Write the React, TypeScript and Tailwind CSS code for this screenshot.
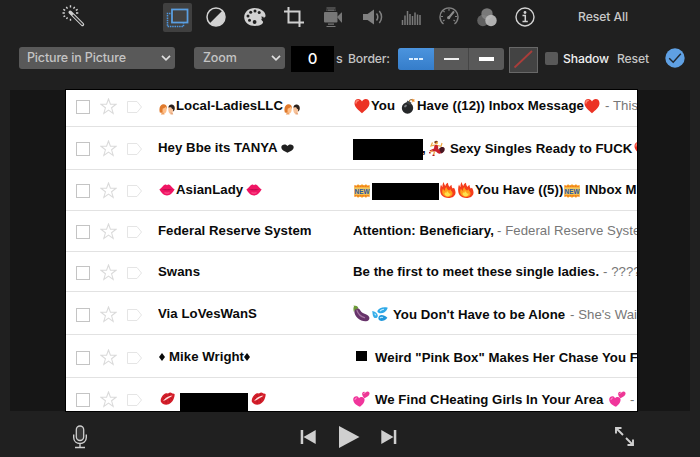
import React from "react";

type P = { className?: string };

const Heart = ({ className = "" }: P) => (
  <svg viewBox="0 0 16 16" className={"h-4 w-4 shrink-0 " + className}>
    <path d="M8 15.200C5 12.400.5 9.300.5 5.200.5 2.600 2.100 1 4.300 1 6 1 7.300 1.900 8 3.400 8.700 1.900 10 1 11.700 1c2.200 0 3.800 1.600 3.800 4.200C15.500 9.300 11 12.400 8 15.200z" fill="#ec3325" />
    <path d="M2 5c0-1.500 1-2.500 2.300-2.500" stroke="#ff8573" strokeWidth="1.400" fill="none" strokeLinecap="round" />
  </svg>
);

const Couple = ({ className = "" }: P) => (
  <svg viewBox="0 0 16 12" className={"h-3 w-4 shrink-0 " + className}>
    <path d="M.8 9.500C-.2 6 .8 1.800 3.800 1.300c3-.4 4.400 1.600 4 4.200L4.500 6.500 3.500 10z" fill="#e07a2c" />
    <path d="M3.800 5.500C5.300 5.600 6 4.200 7 4c1.200 1.500.8 5.500-1.200 6.500C4 10.800 3 8 3.800 5.500z" fill="#ffc08a" />
    <path d="M1.800 11.500L3 9.500h1.800l.8 2z" fill="#f0a060" />
    <path d="M9.400 4.500C9.500 2 11.500 1.200 13 1.500c2.500.4 3.200 2.500 2.500 5.500l-1.300 1.500z" fill="#2b211c" />
    <path d="M9.500 4.500c1.200.2 2.200-.6 3 .2.400 1 .8 1.300 1.600 1.500.4 1.800-.7 4-2.400 4.500-1.900.1-2.800-3-2.200-6.200z" fill="#f7c39b" />
    <path d="M11.500 11.500V9.500h2.200l.5 2z" fill="#e9a97e" />
  </svg>
);

const Bomb = ({ className = "" }: P) => (
  <svg viewBox="0 0 14 16" className={"h-4 w-[14px] shrink-0 " + className}>
    <circle cx="6.500" cy="10" r="5.700" fill="#252729" />
    <path d="M6.500 2.500l4 2.200-1.300 2.500-4-2.200z" fill="#3d4144" />
    <path d="M8.500 4C8 1.500 10.500 1 12 2.500" stroke="#9b7a4c" strokeWidth="1.100" fill="none" />
    <path d="M11 .5l1 1 1.500-.6-.3 1.500.8 1-1.500.2-1 1-.2-1.500z" fill="#f08a29" />
    <ellipse cx="4.500" cy="8" rx="1.600" ry="1.100" fill="#777b7e" transform="rotate(-40 4.500 8)" />
  </svg>
);

const Lips = ({ className = "" }: P) => (
  <svg viewBox="0 0 16 12" className={"h-3 w-4 shrink-0 " + className}>
    <path d="M.3 5.600C2.500 4.500 4.500.5 6.300.5 7.200.5 7.500 1.200 8 1.200s.8-.7 1.700-.7c1.800 0 3.800 4 6 5.100-2 3-4.500 6-7.700 6S2.300 8.600.3 5.600z" fill="#f01564" />
    <path d="M1 5.600c3 .2 4.500-.6 7 0 2.500-.6 4 .2 7 0-3.500 1-10.500 1-14 0z" fill="#b00a48" />
    <path d="M5.500 8.800c1.500.5 3.500.5 5 0" stroke="#ff6e9e" strokeWidth=".8" fill="none" />
  </svg>
);

const Kiss = ({ className = "" }: P) => (
  <svg viewBox="0 0 15 13" className={"h-[13px] w-[15px] shrink-0 " + className}>
    <path d="M.9 9.800C0 7.500 2.300 3 5.300 1.600c1.300-.6 2 0 2.700-.2C9.300.2 11 .1 11.700 1c.7.700 2 .6 2.900.9.300 3.900-1.900 8.700-5.900 10.300-2.700 1-6.500.3-7.800-2.400z" fill="#d41e2a" />
    <path d="M3 8.900c2.300-.4 3.200-1.500 5-2.500 1.500-1 3-1.300 4.500-3-2 .4-3.400.5-5 1.500C5.500 5.800 4.500 7.300 3 8.900z" fill="#ffe1df" />
    <path d="M3 5.500l2 1M5.500 3l1.200 2M9.500 1.500L9 4M6 11.500l.3-3M10 10.500L9 7M12.500 7.500l-2-1.700" stroke="#9b101c" strokeWidth=".5" />
  </svg>
);

const Dancer = ({ className = "" }: P) => (
  <svg viewBox="0 0 16 16" className={"h-4 w-4 shrink-0 " + className}>
    <path d="M5.500 4.800l3.500.2.300 4c2 1 3.500 2.500 3 4-1.500 1.600-4 .2-5.300-1.500L2.500 11.500.3 10.500 5 8.500z" fill="#c8202c" />
    <path d="M10 9c1.500-2.500 4.500-2.500 5.700-.6.300 2.300-1 4.300-3.500 5z" fill="#4a1520" />
    <circle cx="7.300" cy="2.700" r="1.800" fill="#f2b04e" />
    <path d="M5.400 2.800C4.800.5 7.800 0 9.100 1.500L7.800 2 6.800 3.200z" fill="#7c3f1f" />
    <path d="M5.500 5.200L2 6l1.500-3.500M8.500 5.500l3.500.8 1-3.300" fill="none" stroke="#efaa45" strokeWidth="1.200" />
    <path d="M5.500 11.500L4.500 15.300M3.500 10.500L1 12.500" stroke="#efaa45" strokeWidth="1.300" />
    <path d="M3.500 15.400h2M.3 12l1 1.500" stroke="#b31523" strokeWidth="1.200" />
  </svg>
);

const NewSign = ({ className = "" }: P) => (
  <svg viewBox="0 0 16 14" className={"h-[14px] w-4 shrink-0 " + className}>
    <path d="M.3 1l2 .7L4 .2l2 1.300L8 .2l2 1.300L12 .2l1.700 1.500 2-.7v12l-2-.7-1.700 1.500-2-1.300-2 1.300-2-1.300-2 1.300-1.700-1.500-2 .7z" fill="#f8a21c" />
    <path d="M.8 2.200h14.400M.8 11.900h14.400" stroke="#e8542c" strokeWidth=".8" strokeDasharray="1.500 1" />
    <rect x=".3" y="3.400" width="15.400" height="7.400" fill="#f0c763" />
    <text x="8" y="9.900" fontSize="8" textAnchor="middle" textLength="15" lengthAdjust="spacingAndGlyphs" className="fill-[#2a55a0] font-['Liberation_Sans',sans-serif] font-bold">NEW</text>
  </svg>
);

const Fire = ({ className = "" }: P) => (
  <svg viewBox="0 0 16 16" className={"h-4 w-4 shrink-0 " + className}>
    <path d="M1.500 13C-.4 10-.1 5.300 1 2.500c.5 1.300.8 2 1.500 2.600C2.400 3 2.600 1.400 3.800 0 4 1.700 4.500 3 5.400 3.900 5.600 2.400 6.600 1.200 8 .8c0 2 .6 3.200 1.700 4.100.3-1 .9-1.700 1.900-2 0 1.500.3 2.600 1.200 3.600l1.200-.8c2 3.500 2.200 6.800-.4 8.800-3.200 2.300-9.500 2-12.100-1.500z" fill="#f53d1c" />
    <path d="M3 12.500c-1.300-2-.9-4.300.1-6 .4 1.400 1.100 2 1.900 2.300-.1-1.800.4-3 1.400-3.800.2 2 1.500 3.100 2.900 3.600.2-.6.6-1 1.200-1.300.3 1.400 1.400 2.100 1.800 3 .8 1.800-.1 3.500-2 4.200-2.500.9-5.800.2-7.300-2z" fill="#ff9e1a" />
    <path d="M5 13c-.7-1-.4-2 .2-2.800l1 .9.800-2 2.500 2.700.9-.5c.4 1.500-.5 2.600-2 2.900-1.400.2-2.700-.3-3.400-1.200z" fill="#ffe14d" />
  </svg>
);

const Eggplant = ({ className = "" }: P) => (
  <svg viewBox="0 0 17 17" className={"h-[17px] w-[17px] shrink-0 " + className}>
    <path d="M3 3c3-.6 4 2 5.500 4 1.500 1.800 4.500 1.700 6.500 3.500 2.600 2.200 1.400 5.300-2 5.700C7.500 16.700 1 11.500 1.300 5.500z" fill="#67336a" />
    <path d="M4 5.500c1 3 3.500 6 7.500 7.200" stroke="#a475a3" strokeWidth="1.300" fill="none" strokeLinecap="round" />
    <path d="M.5.500l1.500.3C4 .6 5 2 5.500 3.500L4 3.300 3.300 5 2.200 4 .9 7C.2 5 .3 2.500 1 1.600z" fill="#6d9b38" />
  </svg>
);

const Sweat = ({ className = "" }: P) => (
  <svg viewBox="0 0 16 15" className={"h-4 w-4 shrink-0 " + className}>
    <path d="M5.500 4.200C7 1.500 11 0 15.800 1.200c-1.500 4.300-5.300 6.300-8.300 5.500-1.500-.5-2.500-1.300-2-2.500z" fill="#2fa9e7" />
    <path d="M.2 4.500c2.500.3 5.500 2.200 5.600 4.800 0 2.400-2.700 3-4.100 1.400C.4 9 .7 6.500.2 4.500z" fill="#36aee9" />
    <path d="M7.300 9.200c1.900-1.500 5.200-.7 8.100 2-2.200 2.800-5.700 4-7.700 2.800-1.800-1-1.700-3.400-.4-4.800z" fill="#2298db" />
    <path d="M8 4.500c1-1 2.500-1.700 4-1.700M8 11.500c.8-.8 2-.8 3-.5M2.500 7.200c.8.500 1.200 1 1.300 1.700" stroke="#c2ecff" strokeWidth="1.100" fill="none" />
  </svg>
);

const TwoHearts = ({ className = "" }: P) => (
  <svg viewBox="0 0 17 16" className={"h-4 w-[17px] shrink-0 " + className}>
    <path d="M7 15.800C3.500 14.500.1 12 .2 8.300.3 6 2.700 4.600 4.600 5.500c.7.400 1.200 1 1.400 1.700C7 5.800 9.600 5.300 11 7c1.800 2.400-.8 6.500-4 8.800z" fill="#f0359b" />
    <path d="M11.500 7.200C9.800 5.500 8.600 3.500 9.400 1.800c.7-1.400 2.400-1.500 3.300-.1C13.500.3 15.500.2 16.300 1.600c1.200 2.300-2 4.500-4.800 5.600z" fill="#ed3795" />
    <path d="M2 8.500c0-1 .7-1.500 1.500-1.500M10.700 2.500c.1-.5.5-.8.900-.8" stroke="#ff9dd1" strokeWidth="1" fill="none" strokeLinecap="round" />
  </svg>
);

const BlackHeart = ({ className = "" }: P) => (
  <svg viewBox="0 0 12 10" preserveAspectRatio="none" className={"h-[9px] w-[13px] shrink-0 " + className}>
    <path d="M6 9.700C4 8.200.3 6.800.3 3.500.3.100 4.900-.5 6 2.300 7.100-.5 11.700.100 11.700 3.500 11.700 6.800 8 8.200 6 9.700z" fill="#202020" />
  </svg>
);

const Diamond = ({ className = "" }: P) => (
  <svg viewBox="0 0 6 8" className={"h-2 w-[6px] shrink-0 " + className}>
    <path d="M3 0l3 4-3 4-3-4z" fill="#0a0a0a" />
  </svg>
);

const Box = ({ className = "" }: P) => <span className={"shrink-0 bg-black " + className} />;

const T = ({ className = "", children }: P & { children: React.ReactNode }) => (
  <span className={"shrink-0 whitespace-pre " + className}>{children}</span>
);

const grey = "font-normal text-[#777]";

const rows = [
  {
    row: "h-[37px]", icons: "pt-[10px]", from: "pt-2", subj: "pt-2",
    sender: <><Couple className="mt-[5px] ml-[1px]" /><T className="ml-px w-[108px]">Local-LadiesLLC</T><Couple className="mt-[5px]" /></>,
    subject: <><Heart className="mt-0 ml-[1px]" /><T className="ml-px w-[30px]">You</T><Bomb /><T className="ml-[2px] w-[167px]">Have ((12)) Inbox Message</T><Heart /><T className={"ml-[5px] " + grey}>- This</T></>,
  },
  {
    row: "h-[43px]", icons: "pt-[15px]", from: "pt-[13px]", subj: "pt-[14px]",
    sender: <><T className="w-[122px]">Hey Bbe its TANYA</T><BlackHeart className="mt-1 ml-px" /></>,
    subject: <><Box className="-mt-[2px] h-[21px] w-[70px]" /><T className="w-[6px] -ml-[1px]">,</T><Dancer className="-mt-[1px] ml-px" /><T className="ml-[5px] w-[183px]">Sexy Singles Ready to FUCK</T><Heart className="ml-px" /></>,
  },
  {
    row: "h-[41px]", icons: "pt-[14px]", from: "pt-3", subj: "pt-3",
    sender: <><Lips className="mt-[2px] ml-[1px]" /><T className="ml-px w-[70px]">AsianLady</T><Lips className="mt-[2px]" /></>,
    subject: <><NewSign className="mt-[2px] ml-[1px]" /><Box className="mt-px ml-[2px] h-[17px] w-[67px]" /><Fire className="ml-[1px]" /><Fire className="ml-[2px]" /><T className="ml-[1px] w-[90px]">You Have ((5))</T><NewSign className="mt-[2px] -ml-px" /><T className="ml-[5px]">INbox M</T></>,
  },
  {
    row: "h-[41px]", icons: "pt-[14px]", from: "pt-3", subj: "pt-3",
    sender: <T>Federal Reserve System</T>,
    subject: <><T className="w-[144px]">Attention: Beneficiary,</T><T className={grey}>- Federal Reserve Syste</T></>,
  },
  {
    row: "h-10", icons: "pt-[14px]", from: "pt-3", subj: "pt-3",
    sender: <T>Swans</T>,
    subject: <><T className="w-[250px]">Be the first to meet these single ladies.</T><T className={grey}>- ????</T></>,
  },
  {
    row: "h-[43px]", icons: "pt-[16px]", from: "pt-[14px]", subj: "pt-[15px]",
    sender: <T>Via LoVesWanS</T>,
    subject: <><Eggplant className="-mt-[2px]" /><Sweat className="-mt-px ml-[2px]" /><T className="ml-[5px] w-[177px]">You Don't Have to be Alone</T><T className={grey}>- She's Wai</T></>,
  },
  {
    row: "h-[43px]", icons: "pt-[16px]", from: "pt-[14px]", subj: "pt-[15px]",
    sender: <><Diamond className="mt-1 ml-px" /><T className="ml-1 w-[75px]">Mike Wright</T><Diamond className="mt-1" /></>,
    subject: <><Box className="mt-[1px] ml-[3px] h-[10px] w-[11px]" /><T className="ml-2">Weird "Pink Box" Makes Her Chase You F</T></>,
  },
  {
    row: "h-[33px]", icons: "pt-[15px]", from: "pt-[14px]", subj: "pt-[14px]",
    sender: <><Kiss className="ml-[2px]" /><Box className="mt-px ml-[5px] h-6 w-[68px]" /><Kiss className="ml-[3px]" /></>,
    subject: <><TwoHearts className="-mt-px" /><T className="ml-[5px] w-[234px]">We Find CHeating Girls In Your Area</T><TwoHearts className="-mt-px" /><T className={"ml-1 " + grey}>-</T></>,
  },
];

const Mark = () => (
  <>
    <span className="h-[14px] w-[14px] shrink-0 border border-[#c4c4c4]" />
    <svg viewBox="0 0 16 16" className="ml-[10px] -mt-[2px] h-[17px] w-[17px] shrink-0">
      <path d="M8 .9l1.800 5h5.300l-4.200 3.300 1.500 5.300L8 11.400l-4.400 3.100 1.500-5.300L.9 5.900h5.300z" fill="none" stroke="#dadada" />
    </svg>
    <svg viewBox="0 0 16 12" className="ml-[10px] mt-[1px] h-3 w-4 shrink-0">
      <path d="M.5.500H10L14.500 6 10 11.500H.5z" fill="none" stroke="#e5e5e5" />
    </svg>
  </>
);

const Chevron = () => (
  <svg viewBox="0 0 10 6" className="h-[6px] w-[10px]">
    <path d="M1 .8l4 4 4-4" fill="none" stroke="#dedede" strokeWidth="1.700" />
  </svg>
);

function Toolbar() {
  return (
    <div className="flex h-9 items-start text-[#c9c9c9]">
      <svg viewBox="0 0 24 24" className="mt-[3px] ml-[61px] h-6 w-6">
        <path d="M9.500 2.300v2.200M5.300 3.800l1.200 1.800M13.700 3.800l-1.200 1.800M1.500 10h2.300M15 10h2.300M5.500 16l1-1.600M9.500 15.800v2M2.300 6.400l1.900.9M16.700 6.400l-1.900.9M2.500 13.600l1.700-.8" stroke="#d5d5d5" strokeWidth="1.400" />
        <path d="M9.200 9.300l12.300 12.200" stroke="#d0d0d0" strokeWidth="3.400" strokeLinecap="round" />
        <path d="M12.200 12.300l9 8.900" stroke="#292929" strokeWidth="1.500" strokeLinecap="round" />
      </svg>
      <div className="mt-[3px] ml-[78px] flex h-[29px] w-[29px] items-center justify-center rounded-[2px] bg-[#404040]">
        <svg viewBox="0 0 23 20" className="h-5 w-[23px]">
          <path d="M4.500 5.500H1.500v13h16v-3" fill="none" stroke="#4d96df" strokeWidth="1.500" strokeDasharray="1.500 .8" />
          <rect x="6" y="1.500" width="15.500" height="13" fill="#443b31" stroke="#5a9fe2" strokeWidth="1.800" />
          <rect x="7.500" y="3" width="12.500" height="10" fill="#424242" />
        </svg>
      </div>
      <svg viewBox="0 0 20 20" className="mt-[7px] ml-[14px] h-5 w-5">
        <circle cx="10" cy="10" r="9" fill="#202020" stroke="#d2d2d2" strokeWidth="1.500" />
        <path d="M16.500 3.500a9.200 9.200 0 01-13 13z" fill="#d2d2d2" />
      </svg>
      <svg viewBox="0 0 22 20" className="mt-[7px] ml-[18px] h-5 w-[22px]">
        <path d="M10.500 1C5 1 0 5 .2 10.500.4 15.600 5.300 19 11 19c4 0 7.400-1.300 8-3.400.5-1.600-2.200-2.200-1.600-3.700.5-1.200 3.900-.8 4.100-3C21.800 4.500 16 1 10.500 1z" fill="#d2d2d2" />
        <circle cx="4" cy="9" r="1.500" fill="#222" /><circle cx="6.700" cy="5.200" r="1.500" fill="#222" />
        <circle cx="11" cy="3.900" r="1.500" fill="#222" /><circle cx="15.200" cy="5.500" r="1.500" fill="#222" />
        <circle cx="5.500" cy="13.200" r="1.500" fill="#222" /><circle cx="10.600" cy="15" r="1.900" fill="#222" />
        <path d="M17.200 9.500l3 .6-2 1.600z" fill="#222" />
      </svg>
      <svg viewBox="0 0 20 20" className="mt-[7px] ml-[18px] h-5 w-5">
        <path d="M4.500 0v15.500H20M0 4.500h15.500V20" fill="none" stroke="#cfcfcf" strokeWidth="2" />
      </svg>
      <svg viewBox="0 0 20 20" className="mt-[7px] ml-[19px] h-5 w-5" fill="#777">
        <rect x="1" y="5" width="13.500" height="10.500" rx="1" />
        <path d="M14 10l4.500-4.500h.5v10h-.5z" />
        <path d="M4 3.800V2.500M12 3.800V2.500M3.500 1h9M5 3.200h6M3.500 19.500h9M5 17.200h6" stroke="#777" strokeWidth="1.200" />
      </svg>
      <svg viewBox="0 0 20 18" className="mt-2 ml-5 h-[18px] w-5">
        <path d="M0 6h4.500L11 1.500v15L4.500 12H0z" fill="#808080" />
        <path d="M13.500 5.500c1.500 2 1.500 5 0 7M16.300 3c3 3.500 3 8.500 0 12" fill="none" stroke="#808080" strokeWidth="1.500" />
      </svg>
      <svg viewBox="0 0 20 17" className="mt-[9px] ml-[18px] h-[17px] w-5">
        <path d="M1.500 16v-5M4 16V6.500M6.500 16V2M9 16V5M11.500 16V7M14 16V3.500M16.500 16V5.500M19 16V6" stroke="#7a7a7a" strokeWidth="1.500" />
      </svg>
      <svg viewBox="0 0 20 18" className="mt-[7px] ml-[18px] h-[18px] w-5">
        <path d="M4.500 17A9 9 0 1115.500 17" fill="none" stroke="#808080" strokeWidth="1.400" />
        <path d="M10 10.500L14.500 5" stroke="#8c8c8c" strokeWidth="2" strokeLinecap="round" />
        <circle cx="9.700" cy="10.700" r="1.600" fill="#8c8c8c" />
        <path d="M10 1.500v2.200M2 9.500h2M16 9.500h2M4.400 4l1.200 1.200M4 14l1.500-1M16 14l-1.500-1" stroke="#808080" strokeWidth="1.200" />
      </svg>
      <svg viewBox="0 0 20 19" className="mt-2 ml-[18px] h-[19px] w-5">
        <circle cx="5.900" cy="12.500" r="5.700" fill="#616161" />
        <circle cx="10" cy="5.900" r="5.700" fill="#858585" fillOpacity=".88" />
        <circle cx="14" cy="12.500" r="5.700" fill="#bdbdbd" fillOpacity=".92" />
      </svg>
      <svg viewBox="0 0 20 20" className="mt-[7px] ml-[18px] h-5 w-5">
        <circle cx="10" cy="10" r="9" fill="none" stroke="#d2d2d2" strokeWidth="1.400" />
        <circle cx="10" cy="5.500" r="1.400" fill="#d2d2d2" />
        <path d="M7.500 8.500h2.800v6M7.500 14.500h5.300" fill="none" stroke="#d2d2d2" strokeWidth="1.500" />
      </svg>
      <span className="mt-[9px] ml-[43px] text-[12.200px] leading-4 font-medium tracking-[-0.08px]">Reset All</span>
    </div>
  );
}

function Controls() {
  return (
    <div className="flex h-[54px] items-start text-[12.500px] leading-4 font-medium tracking-[-0.15px] text-[#c4c4c4]">
      <div className="mt-[11px] ml-[19px] flex h-[22px] w-[156px] items-center justify-between rounded-[3px] bg-[#595959] pr-1 pl-2">
        <span>Picture in Picture</span><Chevron />
      </div>
      <div className="mt-[11px] ml-[19px] flex h-[22px] w-[91px] items-center justify-between rounded-[3px] bg-[#595959] pr-1 pl-[9px]">
        <span>Zoom</span><Chevron />
      </div>
      <div className="mt-[10px] ml-[6px] flex h-[26px] w-[43px] items-center justify-center bg-black text-[15px] text-white">0</div>
      <span className="mt-[15px] ml-[2px] w-[7px]">s</span>
      <span className="mt-[15px] ml-[5px] w-[50px] text-[12.200px]">Border:</span>
      <div className="mt-3 flex h-[22px] w-[106px] overflow-hidden rounded-[3px] bg-[#595959]">
        <div className="flex w-[36px] items-center justify-center gap-px bg-linear-to-b from-[#4b94de] to-[#357dca]">
          <i className="h-[2px] w-[4px] bg-[#dbeeff]" /><i className="h-[2px] w-[4px] bg-[#dbeeff]" /><i className="h-[2px] w-[4px] bg-[#dbeeff]" />
        </div>
        <div className="flex w-[35px] items-center justify-center border-r border-[#454545]"><i className="h-[2px] w-[15px] bg-[#eee]" /></div>
        <div className="flex w-[35px] items-center justify-center"><i className="h-1 w-[15px] bg-white" /></div>
      </div>
      <svg viewBox="0 0 29 26" className="mt-[11px] ml-[5px] h-[26px] w-[29px]">
        <rect x=".5" y=".5" width="28" height="25" fill="#434343" stroke="#686868" />
        <path d="M5.500 20.500L23 4" stroke="#aa3d3a" strokeWidth="1.800" />
      </svg>
      <span className="mt-[16px] ml-[7px] h-[13px] w-[13px] rounded-[2px] bg-[#595959]" />
      <span className="mt-[15px] ml-[5px] w-[54px] text-[12.200px] text-[#f0f0f0]">Shadow</span>
      <span className="mt-[15px] w-[48px] text-[12.200px]">Reset</span>
      <svg viewBox="0 0 20 20" className="mt-3 h-5 w-5">
        <circle cx="10" cy="10" r="9.700" fill="#5fa0e3" />
        <path d="M4.200 10.300l4 4 7.600-8.600" fill="none" stroke="#202830" strokeWidth="1.400" />
      </svg>
    </div>
  );
}

function Transport() {
  return (
    <div className="flex h-[46px] items-start">
      <svg viewBox="0 0 14 24" className="mt-[14px] ml-[73px] h-6 w-[14px]">
        <rect x="3.300" y="1" width="7.400" height="14.500" rx="3.700" fill="#383838" stroke="#cecece" strokeWidth="1.300" />
        <path d="M.7 9.500v3c0 8 12.600 8 12.600 0v-3M7 18.500V22M2 22.500h10" fill="none" stroke="#cecece" strokeWidth="1.400" />
      </svg>
      <svg viewBox="0 0 16 14" className="mt-[19px] ml-[213px] h-[14px] w-4" fill="#cfcfcf">
        <path d="M.7 0h2.500v14H.7zM15.700 0v14L3.500 7z" />
      </svg>
      <svg viewBox="0 0 21 22" className="mt-[15px] ml-[23px] h-[22px] w-[21px]" fill="#cfcfcf">
        <path d="M0 0l20.500 11L0 22z" />
      </svg>
      <svg viewBox="0 0 16 14" className="mt-[19px] ml-[21px] h-[14px] w-4" fill="#cfcfcf">
        <path d="M12.800 0h2.500v14h-2.500zM.3 0v14l12.200-7z" />
      </svg>
      <svg viewBox="0 0 19 19" className="mt-[16px] ml-[218px] h-[19px] w-[19px]">
        <path d="M1 6.500V1h5.500M12.500 18H18v-5.500M1.500 1.500L8 8M11 11L17.500 17.500" fill="none" stroke="#cfcfcf" strokeWidth="1.900" />
      </svg>
    </div>
  );
}

export default function App() {
  return (
    <div className="h-[457px] w-[700px] overflow-hidden bg-[#202020] font-['Inter',sans-serif]">
      <Toolbar />
      <Controls />
      <main className="mx-[10px] flex h-[321px] bg-[#161616]">
        <div className="w-[56px] shrink-0" />
        <div className="w-[571px] shrink-0 overflow-hidden bg-white font-['Liberation_Sans',Arial,sans-serif] text-[13.200px] leading-4 font-bold tracking-[0.05px] text-[#0a0a0a] shadow-[0_0_0_1px_#000]">
          {rows.map((r, i) => (
            <div key={i} className={"flex border-b border-[#e2e2e2] last:border-0 " + r.row}>
              <div className={"flex w-[92px] shrink-0 items-start pl-[10px] " + r.icons}><Mark /></div>
              <div className={"flex w-[195px] shrink-0 items-start overflow-hidden " + r.from}>{r.sender}</div>
              <div className={"flex min-w-0 flex-1 items-start overflow-hidden " + r.subj}>{r.subject}</div>
            </div>
          ))}
        </div>
        <div className="flex-1" />
      </main>
      <Transport />
    </div>
  );
}
